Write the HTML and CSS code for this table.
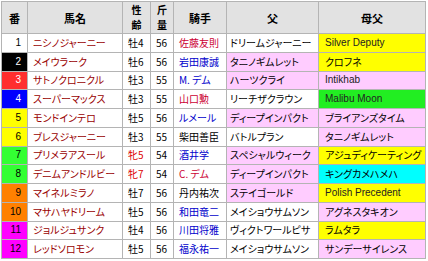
FILE: index.html
```html
<!DOCTYPE html>
<html lang="ja">
<head>
<meta charset="utf-8">
<title>出走表</title>
<link rel="stylesheet" href="styles.css">
</head>
<body>
<table class="race">
  <colgroup>
    <col class="c-no"><col class="c-name"><col class="c-sex"><col class="c-wt"><col class="c-jk"><col class="c-sire"><col class="c-bms">
  </colgroup>
  <thead>
    <tr>
      <th>番</th><th>馬名</th><th class="stack"><span class="ln">性</span><span class="ln">齢</span></th><th class="stack"><span class="ln">斤</span><span class="ln">量</span></th><th>騎手</th><th>父</th><th>母父</th>
    </tr>
  </thead>
  <tbody>
    <tr><td class="no w1">1</td><td class="name">ニシノジャーニー</td><td>牡4</td><td>56</td><td class="jk red">佐藤友則</td><td class="sire">ドリームジャーニー</td><td class="bms en y">Silver Deputy</td></tr>
    <tr><td class="no w2">2</td><td class="name">メイウラーク</td><td>牡6</td><td>56</td><td class="jk blue">岩田康誠</td><td class="sire p">タニノギムレット</td><td class="bms y">クロフネ</td></tr>
    <tr><td class="no w3">3</td><td class="name">サトノクロニクル</td><td>牡3</td><td>55</td><td class="jk blue">M. デム</td><td class="sire p">ハーツクライ</td><td class="bms en p">Intikhab</td></tr>
    <tr><td class="no w4">4</td><td class="name">スーパーマックス</td><td>牡3</td><td>55</td><td class="jk red">山口勲</td><td class="sire">リーチザクラウン</td><td class="bms en g">Malibu Moon</td></tr>
    <tr><td class="no w5">5</td><td class="name">モンドインテロ</td><td>牡5</td><td>56</td><td class="jk blue">ルメール</td><td class="sire p">ディープインパクト</td><td class="bms p">ブライアンズタイム</td></tr>
    <tr><td class="no w5">6</td><td class="name">ブレスジャーニー</td><td>牡3</td><td>55</td><td class="jk">柴田善臣</td><td class="sire">バトルプラン</td><td class="bms p">タニノギムレット</td></tr>
    <tr><td class="no w7">7</td><td class="name">プリメラアスール</td><td class="mare">牝5</td><td>54</td><td class="jk blue">酒井学</td><td class="sire p">スペシャルウィーク</td><td class="bms y">アジュディケーティング</td></tr>
    <tr><td class="no w7">8</td><td class="name">デニムアンドルビー</td><td class="mare">牝7</td><td>54</td><td class="jk red">C. デム</td><td class="sire p">ディープインパクト</td><td class="bms c">キングカメハメハ</td></tr>
    <tr><td class="no w9">9</td><td class="name">マイネルミラノ</td><td>牡7</td><td>56</td><td class="jk">丹内祐次</td><td class="sire p">ステイゴールド</td><td class="bms en y">Polish Precedent</td></tr>
    <tr><td class="no w9">10</td><td class="name">マサハヤドリーム</td><td>牡5</td><td>56</td><td class="jk blue">和田竜二</td><td class="sire">メイショウサムソン</td><td class="bms p">アグネスタキオン</td></tr>
    <tr><td class="no w11">11</td><td class="name">ジョルジュサンク</td><td>牡4</td><td>56</td><td class="jk blue">川田将雅</td><td class="sire">ヴィクトワールピサ</td><td class="bms y">ラムタラ</td></tr>
    <tr><td class="no w11">12</td><td class="name">レッドソロモン</td><td>牡5</td><td>56</td><td class="jk blue">福永祐一</td><td class="sire">メイショウサムソン</td><td class="bms p">サンデーサイレンス</td></tr>
  </tbody>
</table>
</body>
</html>
```
FILE: styles.css
```css
html, body {
  margin: 0;
  padding: 0;
  background: #ffffff;
}
body {
  padding: 1px 0 0 1px;
}
.race {
  border-collapse: collapse;
  table-layout: fixed;
  width: 424px;
  font-family: "Noto Sans CJK JP", "Liberation Sans", sans-serif;
  font-feature-settings: "palt";
  font-size: 10px;
  color: #000;
}
.c-no { width: 26px; }
.c-name { width: 95px; }
.c-sex { width: 28px; }
.c-wt { width: 23px; }
.c-jk { width: 53px; }
.c-sire { width: 92px; }
.c-bms { width: 107px; }

.race th, .race td {
  border: 1px solid #b4b4b4;
  padding: 0 0 0 5px;
  white-space: nowrap;
  overflow: hidden;
  vertical-align: middle;
  line-height: 12px;
}
.race th {
  background: #e2e2e2;
  font-weight: bold;
  font-size: 11px;
  height: 31px;
  padding: 0;
  text-align: center;
}
.race th.stack {
  font-size: 10px;
  line-height: 14.5px;
}
.ln {
  display: block;
}
.race td {
  height: 17.75px;
}
.race td.no {
  text-align: right;
  padding: 0 6px 0 0;
  font-family: "Liberation Sans", sans-serif;
}
.name { color: #990000; }
.mare { color: #dd0000; }
.jk { padding-left: 6px; }
.red { color: #cc0033; }
.blue { color: #0000cc; }
.race td.sire { padding-left: 3px; }
.race td.bms { padding-left: 6px; }
.en { font-family: "Liberation Sans", sans-serif; font-size: 10px; color: #222; }

.p { background: #ffccff; }
.y { background: #ffff00; }
.g { background: #22ee22; }
.c { background: #00ffff; }

.w1 { background: #ffffff; color: #000; }
.w2 { background: #000000; color: #fff; }
.w3 { background: #ff2e2e; color: #fff; }
.w4 { background: #0000ff; color: #fff; }
.w5 { background: #ffff00; color: #000; }
.w7 { background: #33ff33; color: #000; }
.w9 { background: #ff8000; color: #000; }
.w11 { background: #ff00ff; color: #000; }
```
